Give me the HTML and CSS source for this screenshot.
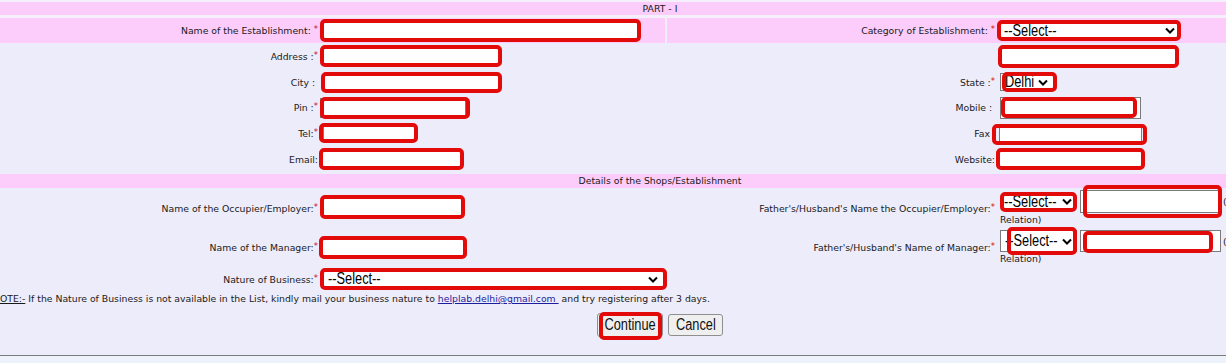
FILE: index.html
```html
<!DOCTYPE html>
<html lang="en">
<head>
  <meta charset="UTF-8" />
  <title>Shops &amp; Establishment Registration</title>
  <link rel="stylesheet" href="styles.css">
</head>
<body>
  <div class="top-strip"></div>
  <div class="band band-part">PART - I</div>

  <div class="form-grid part1">
    <div class="lbl pink">Name of the Establishment:&nbsp;<span class="req">*</span></div>
    <div class="cell pink"><div class="inp f-est"><span class="mark"></span></div></div>
    <div class="lbl pink sep">Category of Establishment:&nbsp;<span class="req">*</span></div>
    <div class="cell pink">
      <div class="inp sel f-cat"><span class="opt">--Select--</span><svg class="chev" width="10" height="7" viewBox="0 0 10 7"><path d="M1 1.5l4 4 4-4" fill="none" stroke="#000" stroke-width="2"/></svg><span class="mark"></span></div>
    </div>

    <div class="lbl">Address :<span class="req">*</span></div>
    <div class="cell"><div class="inp f-addr"><span class="mark"></span></div></div>
    <div class="lbl"></div>
    <div class="cell"><div class="inp f-addr2"><span class="mark"></span></div></div>

    <div class="lbl">City :&nbsp;</div>
    <div class="cell"><div class="inp f-city"><span class="mark"></span></div></div>
    <div class="lbl">State :<span class="req">*</span></div>
    <div class="cell">
      <div class="inp sel f-state"><span class="opt">Delhi</span><svg class="chev" width="10" height="7" viewBox="0 0 10 7"><path d="M1 1.5l4 4 4-4" fill="none" stroke="#000" stroke-width="2"/></svg><span class="mark"></span></div>
    </div>

    <div class="lbl">Pin :<span class="req">*</span></div>
    <div class="cell"><div class="inp f-pin"><span class="mark"></span></div></div>
    <div class="lbl">Mobile :&nbsp;</div>
    <div class="cell"><div class="inp f-mobile"><span class="mark"></span></div></div>

    <div class="lbl">Tel:<span class="req">*</span></div>
    <div class="cell"><div class="inp f-tel"><span class="mark"></span></div></div>
    <div class="lbl lbl-fax">Fax</div>
    <div class="cell"><div class="inp f-fax"><span class="mark"></span></div></div>

    <div class="lbl">Email:</div>
    <div class="cell"><div class="inp f-email"><span class="mark"></span></div></div>
    <div class="lbl">Website:</div>
    <div class="cell"><div class="inp f-web"><span class="mark"></span></div></div>
  </div>

  <div class="band band-details">Details of the Shops/Establishment</div>

  <div class="form-grid part2">
    <div class="lbl">Name of the Occupier/Employer:<span class="req">*</span></div>
    <div class="cell"><div class="inp f-occ"><span class="mark"></span></div></div>
    <div class="lbl">Father's/Husband's Name the Occupier/Employer:<span class="req">*</span></div>
    <div class="rel">
      <div class="rel-line line-occ">
        <div class="inp sel f-fsel"><span class="opt">--Select--</span><svg class="chev" width="10" height="7" viewBox="0 0 10 7"><path d="M1 1.5l4 4 4-4" fill="none" stroke="#000" stroke-width="2"/></svg><span class="mark"></span></div>
        <div class="inp f-fin"><span class="mark"></span></div>
        <span class="paren">(</span>
      </div>
      <div class="rel-text">Relation)</div>
    </div>

    <div class="lbl">Name of the Manager:<span class="req">*</span></div>
    <div class="cell"><div class="inp f-mgr"><span class="mark"></span></div></div>
    <div class="lbl">Father's/Husband's Name of Manager:<span class="req">*</span></div>
    <div class="rel">
      <div class="rel-line line-mgr">
        <div class="inp sel f-msel"><span class="opt">--Select--</span><svg class="chev" width="10" height="7" viewBox="0 0 10 7"><path d="M1 1.5l4 4 4-4" fill="none" stroke="#000" stroke-width="2"/></svg><span class="mark"></span></div>
        <div class="inp f-min"><span class="mark"></span></div>
        <span class="paren paren-mgr">(</span>
      </div>
      <div class="rel-text">Relation)</div>
    </div>

    <div class="lbl">Nature of Business:<span class="req">*</span></div>
    <div class="cell">
      <div class="inp sel f-nature"><span class="opt">--Select--</span><svg class="chev" width="10" height="7" viewBox="0 0 10 7"><path d="M1 1.5l4 4 4-4" fill="none" stroke="#000" stroke-width="2"/></svg><span class="mark"></span></div>
    </div>
  </div>

  <p class="note"><u>NOTE:-</u> If the Nature of Business is not available in the List, kindly mail your business nature to <a class="mail" href="#">helplab.delhi@gmail.com&nbsp;</a>&nbsp;and try registering after 3 days.</p>

  <div class="actions">
    <button type="button" class="btn btn-continue"><span class="btn-text">Continue</span><span class="mark"></span></button>
    <button type="button" class="btn btn-cancel"><span class="btn-text">Cancel</span></button>
  </div>
  <div class="rule"></div>
</body>
</html>
```

FILE: styles.css
```css
* {
    margin: 0;
    padding: 0;
    box-sizing: border-box;
}
html, body {
    width: 1226px;
    height: 363px;
    overflow: hidden;
}
body {
    font-family: "DejaVu Sans", Verdana, sans-serif;
    font-size: 9.3px;
    color: #1a1a1a;
    background: #edecfa;
}
.top-strip {
    height: 2px;
    background: #f4f0fb;
}
.band {
    background: #fccdfb;
    text-align: center;
    padding-left: 94px;
    white-space: nowrap;
}
.band-part {
    height: 16px;
    line-height: 13px;
    border-bottom: 3px solid #f5eefb;
}
.band-details {
    height: 14px;
    line-height: 14px;
    margin-top: 2px;
}

/* grid: label | field | label | field */
.form-grid {
    display: grid;
    grid-template-columns: 320px 345px 332px 229px;
}
.part1 { grid-template-rows: 25px 26px 26px 25px 26px 26px; }
.part2 { grid-template-rows: 40px 38px 26px; }

.lbl {
    display: flex;
    align-items: center;
    justify-content: flex-end;
    padding-right: 2px;
    white-space: nowrap;
}
.lbl-fax { padding-right: 7px; }
.cell {
    display: flex;
    align-items: center;
}
.pink { background: #fccdfb; }
.sep { border-left: 2px solid #f3eefa; }
.req {
    color: #d01010;
    font-size: 8.5px;
    margin-top: -3px;
}

/* inputs + red annotation outline */
.inp {
    position: relative;
    flex: none;
    background: #fff;
    box-shadow: inset 0 0 0 1px #7a7a7a;
}
.mark {
    position: absolute;
    top: -2px;
    right: -2px;
    bottom: -2px;
    left: -2px;
    border: 4px solid #e30a0a;
    border-radius: 5px;
}
.sel {
    display: flex;
    align-items: center;
    font-family: "Liberation Sans", Arial, sans-serif;
    font-size: 16px;
    line-height: 1;
    color: #000;
}
.opt {
    flex: 1;
    width: 0;
    white-space: nowrap;
    transform: scaleX(0.8);
    transform-origin: left center;
}
.chev { flex: none; }

.f-est { width: 317px; height: 19px; margin-left: 2px; }
.f-cat { width: 180px; height: 17px; margin-left: 2px; padding: 0 4px 0 5px; }
.f-addr { width: 178px; height: 18px; margin-left: 2px; }
.f-addr2 { width: 177px; height: 19px; margin-left: 3px; }
.f-city { width: 177px; height: 17px; margin-left: 3px; }
.f-state { width: 55px; height: 18px; margin-left: 3px; padding: 0 7px 0 5px; }
.f-state .mark { left: 2px; right: -2px; top: -1px; bottom: -1px; }
.f-pin { width: 146px; height: 20px; }
.f-pin .mark { left: 0; right: -4px; top: -1px; bottom: -1px; }
.f-tel { width: 92px; height: 18px; margin-left: 3px; }
.f-tel .mark { left: -4px; right: -3px; top: -1px; bottom: -1px; }
.f-email { width: 141px; height: 18px; margin-left: 1px; }
.f-mobile { width: 141px; height: 22px; margin-left: 3px; }
.f-mobile .mark { left: 1px; right: 4px; top: 0; bottom: 1px; }
.f-fax { width: 143px; height: 16px; margin-left: 2px; margin-top: 4px; }
.f-fax .mark { left: -7px; right: -5px; top: -3px; bottom: -2px; }
.f-web { width: 145px; height: 18px; margin-left: 1px; }

.f-occ { width: 141px; height: 20px; margin-left: 2px; margin-bottom: 2px; }
.f-mgr { width: 144px; height: 19px; margin-left: 1px; }
.f-nature { width: 343px; height: 18px; margin-left: 2px; padding: 0 7px 0 6px; }

/* relation pair */
.rel {
    padding-top: 2px;
    white-space: nowrap;
}
.rel-line {
    display: flex;
    align-items: center;
}
.line-occ { height: 23px; }
.line-mgr { height: 22px; }
.rel-text {
    margin-left: 3px;
    height: 13px;
    line-height: 14px;
}
.f-fsel { width: 73px; height: 16px; margin-left: 5px; padding: 0 3px 0 2px; }
.f-fin { width: 139px; height: 23px; margin-left: 5px; }
.f-fin .mark { left: 3px; right: -3px; top: -5px; bottom: -5px; }
.f-msel { width: 77px; height: 22px; margin-left: 3px; padding: 0 5px 0 5px; }
.f-msel .mark { left: 7px; right: 0; top: -3px; bottom: -3px; }
.f-min { width: 141px; height: 22px; margin-left: 3px; }
.f-min .mark { left: 3px; right: 8px; top: 1px; bottom: -1px; }
.paren { margin-left: 4px; }
.paren-mgr { margin-left: 2px; }

/* note + buttons */
.note {
    height: 14px;
    line-height: 14px;
    margin-left: -7px;
    white-space: nowrap;
}
.mail {
    color: #1c1ca0;
    text-decoration: underline;
}
.actions {
    display: flex;
    align-items: flex-start;
    gap: 5px;
    height: 49px;
    padding: 7px 0 0 597px;
}
.btn {
    position: relative;
    font-family: "Liberation Sans", Arial, sans-serif;
    font-size: 16px;
    color: #111;
    background: #efefef;
    border: 1px solid #8f8f8f;
    border-radius: 3px;
    white-space: nowrap;
}
.btn-text {
    display: inline-block;
    transform: scaleX(0.8);
}
.btn-continue { width: 66px; height: 24px; }
.btn-continue .mark { left: 1px; right: 0; top: -2px; bottom: -4px; }
.btn-cancel { width: 55px; height: 22px; margin-top: 1px; }
.rule {
    height: 8px;
    border-top: 1px solid #7b7b7b;
    background: #eef2fb;
}
```
